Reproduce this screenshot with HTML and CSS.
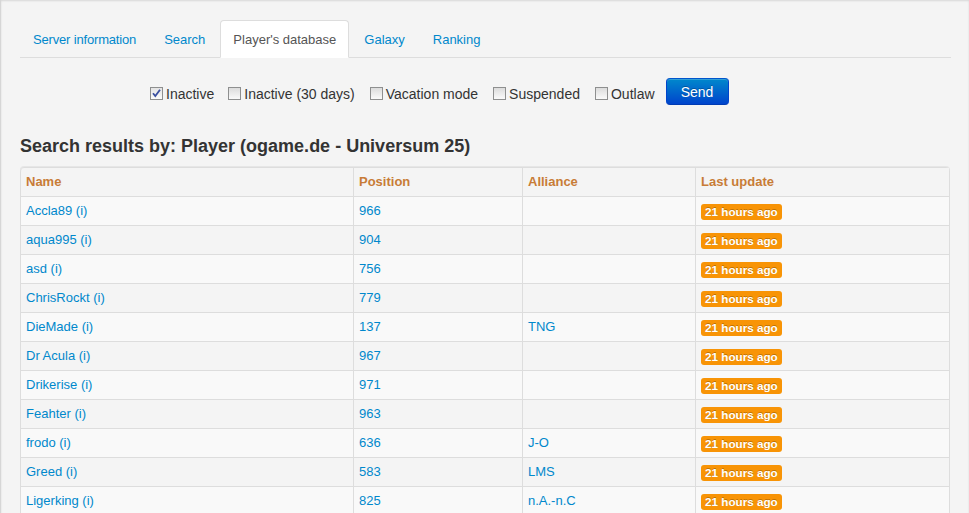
FILE: index.html
```html
<!DOCTYPE html>
<html>
<head>
<meta charset="utf-8">
<link rel="stylesheet" href="styles.css">
</head>
<body>
<div class="page">
  <ul class="tabs">
    <li class="first"><a href="#">Server information</a></li>
    <li><a href="#">Search</a></li>
    <li class="active"><a href="#">Player's database</a></li>
    <li><a href="#">Galaxy</a></li>
    <li><a href="#">Ranking</a></li>
  </ul>

  <form class="filters">
    <label class="opt"><span class="cb checked"><svg width="11" height="11" viewBox="0 0 11 11"><path d="M2 5.2 L4.3 8 L9 1.8" fill="none" stroke="#3a4fa0" stroke-width="1.8"/></svg></span>Inactive</label>
    <label class="opt"><span class="cb"></span>Inactive (30 days)</label>
    <label class="opt"><span class="cb"></span>Vacation mode</label>
    <label class="opt"><span class="cb"></span>Suspended</label>
    <label class="opt"><span class="cb"></span>Outlaw</label>
    <button type="button" class="btn">Send</button>
  </form>

  <h4 class="title">Search results by: Player (ogame.de - Universum 25)</h4>

  <table class="results">
    <colgroup>
      <col class="c1"><col class="c2"><col class="c3"><col class="c4">
    </colgroup>
    <thead>
      <tr><th>Name</th><th>Position</th><th>Alliance</th><th>Last update</th></tr>
    </thead>
    <tbody>
      <tr><td><a href="#">Accla89 (i)</a></td><td><a href="#">966</a></td><td></td><td><span class="label">21 hours ago</span></td></tr>
      <tr><td><a href="#">aqua995 (i)</a></td><td><a href="#">904</a></td><td></td><td><span class="label">21 hours ago</span></td></tr>
      <tr><td><a href="#">asd (i)</a></td><td><a href="#">756</a></td><td></td><td><span class="label">21 hours ago</span></td></tr>
      <tr><td><a href="#">ChrisRockt (i)</a></td><td><a href="#">779</a></td><td></td><td><span class="label">21 hours ago</span></td></tr>
      <tr><td><a href="#">DieMade (i)</a></td><td><a href="#">137</a></td><td><a href="#">TNG</a></td><td><span class="label">21 hours ago</span></td></tr>
      <tr><td><a href="#">Dr Acula (i)</a></td><td><a href="#">967</a></td><td></td><td><span class="label">21 hours ago</span></td></tr>
      <tr><td><a href="#">Drikerise (i)</a></td><td><a href="#">971</a></td><td></td><td><span class="label">21 hours ago</span></td></tr>
      <tr><td><a href="#">Feahter (i)</a></td><td><a href="#">963</a></td><td></td><td><span class="label">21 hours ago</span></td></tr>
      <tr><td><a href="#">frodo (i)</a></td><td><a href="#">636</a></td><td><a href="#">J-O</a></td><td><span class="label">21 hours ago</span></td></tr>
      <tr><td><a href="#">Greed (i)</a></td><td><a href="#">583</a></td><td><a href="#">LMS</a></td><td><span class="label">21 hours ago</span></td></tr>
      <tr><td><a href="#">Ligerking (i)</a></td><td><a href="#">825</a></td><td><a href="#">n.A.-n.C</a></td><td><span class="label">21 hours ago</span></td></tr>
    </tbody>
  </table>
</div>
</body>
</html>
```

FILE: styles.css
```css
html, body {
  margin: 0;
  padding: 0;
  background: #f4f4f4;
}
body {
  font-family: "Liberation Sans", Arial, sans-serif;
  font-size: 13px;
  line-height: 20px;
  color: #333;
  border-left: 1px solid #d6d6d6;
  box-shadow: inset 0 1px 2px rgba(0,0,0,0.12);
  min-height: 513px;
  box-sizing: border-box;
  overflow: hidden;
}
a {
  color: #0088cc;
  text-decoration: none;
}
.page {
  padding: 20px 18px 0 19px;
}
.tabs {
  list-style: none;
  margin: 0 0 20px 0;
  padding: 0;
  display: flex;
  border-bottom: 1px solid #ddd;
  font-size: 13px;
}
.tabs li {
  margin-right: 2px;
  margin-bottom: -1px;
}
.tabs .first a {
  letter-spacing: -0.17px;
}
.tabs a {
  display: block;
  padding: 9px 12px 7px;
  line-height: 20px;
  border: 1px solid transparent;
  border-radius: 4px 4px 0 0;
}
.tabs .active a {
  color: #555;
  background: #fff;
  border-color: #ddd #ddd transparent;
}
.filters {
  display: flex;
  align-items: center;
  padding-left: 130px;
  height: 27px;
  margin: 0 0 31px 0;
  font-size: 14px;
}
.opt {
  display: flex;
  align-items: center;
  margin-right: 15px;
  color: #333;
  padding-top: 4px;
}
.opt:nth-child(2) {
  margin-left: -1px;
}
.cb {
  width: 11px;
  height: 11px;
  border: 1px solid #8e8f8f;
  background: linear-gradient(#dcdcdc, #fafafa);
  margin-right: 3px;
  display: flex;
  align-items: center;
  justify-content: center;
}
.cb.checked {
  background: linear-gradient(#e4e4e4, #fbfbfb);
}
.btn {
  margin-left: -4px;
  font-family: "Liberation Sans", Arial, sans-serif;
  font-size: 14px;
  line-height: 20px;
  height: 27px;
  width: 63px;
  padding: 0;
  color: #fff;
  border: 1px solid #0044cc;
  border-color: #0055cc #0044cc #003bb3;
  border-radius: 4px;
  background: linear-gradient(#0088cc, #0044cc);
  text-shadow: 0 -1px 0 rgba(0,0,0,0.25);
  box-shadow: inset 0 1px 0 rgba(255,255,255,0.2);
}
.title {
  margin: 0 0 11px 0;
  font-size: 18px;
  line-height: 20px;
  font-weight: bold;
  color: #333;
}
.results {
  width: 930px;
  border-collapse: separate;
  border-spacing: 0;
  border: 1px solid #ddd;
  border-left: 0;
  border-radius: 4px;
  box-shadow: 0 -1px 0 #e6e6e6;
  table-layout: fixed;
  font-size: 13px;
}
.c1 { width: 333px; }
.c2 { width: 169px; }
.c3 { width: 173px; }
.c4 { width: 254px; }
.results th,
.results td {
  padding: 4px 5px;
  line-height: 20px;
  text-align: left;
  vertical-align: middle;
  border-left: 1px solid #ddd;
  border-top: 1px solid #ddd;
}
.results thead th {
  border-top: 0;
  color: #c87c37;
  font-weight: bold;
  background: #f4f4f4;
}
.results thead th:first-child { border-top-left-radius: 4px; }
.results tbody tr:nth-child(odd) td { background: #f9f9f9; }
.results tbody tr:nth-child(even) td { background: #f4f4f4; }
.label {
  display: inline-block;
  padding: 1px 4px;
  font-size: 11.7px;
  line-height: 14px;
  font-weight: bold;
  color: #fff;
  background: #f89406;
  border-radius: 3px;
  text-shadow: 0 -1px 0 rgba(0,0,0,0.25);
  vertical-align: middle;
}
```
